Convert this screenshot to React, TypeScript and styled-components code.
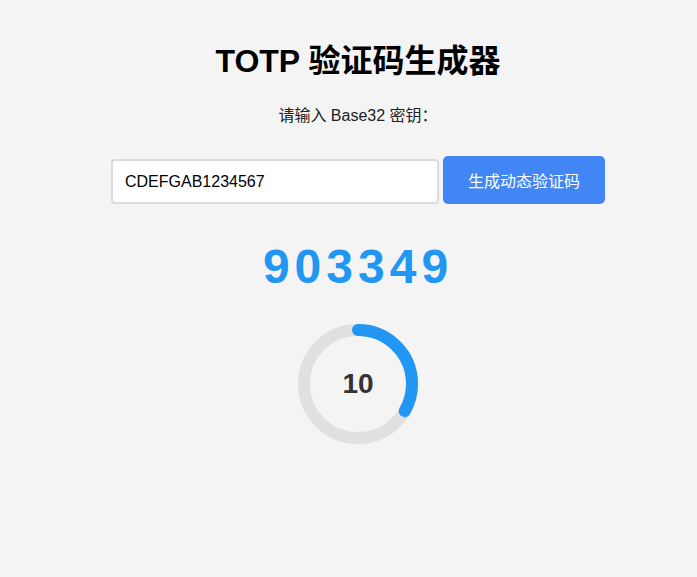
import React from "react";
import styled, { createGlobalStyle } from "styled-components";

const GlobalStyle = createGlobalStyle`
  html, body {
    margin: 0;
    padding: 0;
    background: #f4f4f4;
    overflow: hidden;
  }
  body {
    font-family: "Liberation Sans", Arial, "Noto Sans CJK SC", sans-serif;
  }
`;

const Page = styled.div`
  width: 700px;
  margin-left: 8px;
  padding-top: 41px;
  display: flex;
  flex-direction: column;
  align-items: center;
`;

const Title = styled.h1`
  margin: 0;
  font-size: 32px;
  line-height: 41px;
  font-weight: 700;
  color: #000;
  font-family: "Liberation Sans", Arial, "Noto Sans CJK SC", sans-serif;
`;

const Label = styled.label`
  margin-top: 24px;
  font-size: 16px;
  line-height: 20px;
  color: #222;
`;

const Row = styled.div`
  margin-top: 30px;
  display: flex;
  align-items: flex-start;
  gap: 4px;
`;

const KeyInput = styled.input`
  box-sizing: border-box;
  width: 328px;
  height: 45px;
  margin-top: 3px;
  padding: 0 12px;
  border: 2px solid #dcdcdc;
  border-radius: 4px;
  background: #fff;
  font-family: "Liberation Sans", Arial, sans-serif;
  font-size: 16px;
  color: #000;
  outline: none;
`;

const GenButton = styled.button`
  box-sizing: border-box;
  width: 162px;
  height: 48px;
  border: none;
  border-radius: 5px;
  background: #4285f4;
  color: #fff;
  font-family: "Liberation Sans", Arial, "Noto Sans CJK SC", sans-serif;
  font-size: 16px;
  cursor: pointer;
`;

const Code = styled.div`
  margin-top: 35px;
  font-size: 48px;
  line-height: 56px;
  font-weight: 700;
  letter-spacing: 5px;
  color: #2196f3;
`;

const Timer = styled.div`
  margin-top: 29px;
  display: grid;
  width: 120px;
  height: 120px;
  & > * {
    grid-area: 1 / 1;
  }
`;

const Count = styled.div`
  display: flex;
  align-items: center;
  justify-content: center;
  font-size: 28px;
  font-weight: 700;
  color: #333;
`;

export default function App() {
  const remaining = 10;
  const period = 30;
  const r = 54;
  const c = 2 * Math.PI * r;
  const dash = (remaining / period) * c;
  return (
    <>
      <GlobalStyle />
      <Page>
        <Title>TOTP 验证码生成器</Title>
        <Label>请输入 Base32 密钥：</Label>
        <Row>
          <KeyInput defaultValue="CDEFGAB1234567" />
          <GenButton>生成动态验证码</GenButton>
        </Row>
        <Code>903349</Code>
        <Timer>
          <svg width="120" height="120" viewBox="0 0 120 120">
            <circle cx="60" cy="60" r={r} fill="none" stroke="#e0e0e0" strokeWidth="12" />
            <circle
              cx="60"
              cy="60"
              r={r}
              fill="none"
              stroke="#2196f3"
              strokeWidth="12"
              strokeLinecap="round"
              strokeDasharray={`${dash} ${c}`}
              transform="rotate(-90 60 60)"
            />
          </svg>
          <Count>{remaining}</Count>
        </Timer>
      </Page>
    </>
  );
}
